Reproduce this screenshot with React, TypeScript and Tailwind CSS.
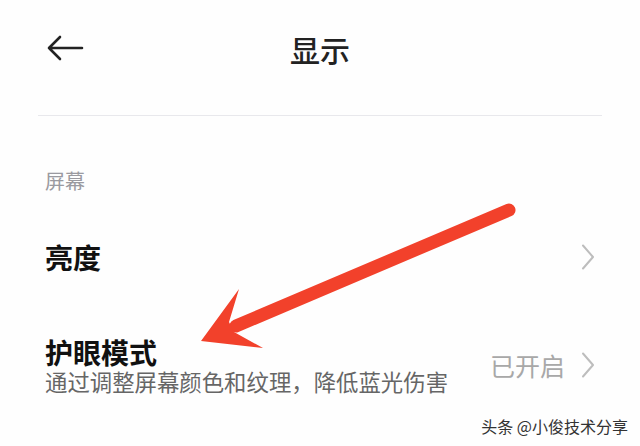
import React from 'react';

const cjk = { fontFamily: '"Noto Sans CJK SC", "Noto Sans", sans-serif' };

function Chevron() {
  return (
    <svg width="14" height="26" viewBox="0 0 14 26" fill="none" className="shrink-0">
      <path d="M2 1.5 L12 13 L2 24.5" stroke="#bdbdbd" strokeWidth="2" strokeLinecap="round" strokeLinejoin="round" />
    </svg>
  );
}

export default function App() {
  return (
    <div className="relative w-[640px] h-[446px] overflow-hidden bg-[#fefefe] text-[#111]" style={cjk}>
      {/* header */}
      <div className="relative h-[98px] flex items-center justify-center">
        <svg className="absolute left-[44px] top-[35px]" width="42" height="28" viewBox="0 0 42 28" fill="none">
          <path d="M5 13 H38 M16 2 L5 13 L16 24" stroke="#222" strokeWidth="2.6" strokeLinecap="round" strokeLinejoin="round" />
        </svg>
        <span className="text-[30px] leading-[30px] text-[#222] font-medium">显示</span>
      </div>
      <div className="h-[17px]" />
      <div className="mx-[38px] h-px bg-[#e8e8ec]" />

      {/* section label */}
      <div className="mt-[55px] px-[45px] text-[20px] leading-[20px] text-[#9a9aa0]">屏幕</div>

      {/* brightness */}
      <div className="mt-[26px] h-[80px] flex items-center justify-between pl-[45px] pr-[45px]">
        <span className="text-[28px] leading-[28px] font-bold">亮度</span>
        <Chevron />
      </div>

      {/* eye mode */}
      <div className="pt-[39px] flex items-center justify-between pl-[45px] pr-[45px]">
        <div className="flex flex-col">
          <span className="text-[28px] leading-[32px] font-bold">护眼模式</span>
          <span className="text-[22.4px] leading-[26px] text-[#666]">通过调整屏幕颜色和纹理，降低蓝光伤害</span>
        </div>
        <div className="flex items-center gap-[16px]">
          <span className="text-[25px] leading-[26px] text-[#a8a8a8]">已开启</span>
          <Chevron />
        </div>
      </div>

      {/* red annotation arrow */}
      <svg className="absolute left-0 top-0 pointer-events-none" width="640" height="446" viewBox="0 0 640 446">
        <line x1="509" y1="210" x2="236" y2="326" stroke="#f2412b" strokeWidth="13" strokeLinecap="round" />
        <polygon points="201,341 239,289 229,322 234,332 263,348" fill="#f2412b" />
      </svg>

      {/* watermark */}
      <div
        className="absolute right-[12px] bottom-[10px] text-[16px] leading-[20px] text-[#333]"
        style={{ textShadow: '0 0 2px #fff, 0 0 2px #fff' }}
      >
        头条 @小俊技术分享
      </div>
    </div>
  );
}
